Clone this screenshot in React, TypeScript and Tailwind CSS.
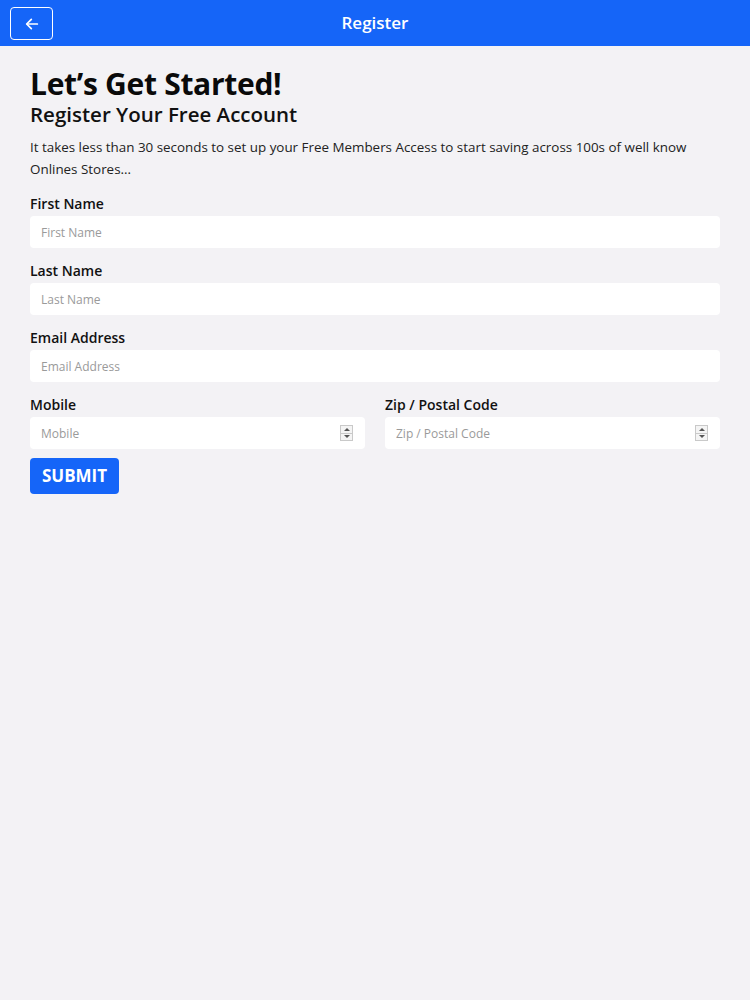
import React from 'react'

const font = { fontFamily: '"Open Sans", "Noto Sans", sans-serif' }

function Spinner() {
  return (
    <div className="absolute right-[12px] top-1/2 -translate-y-1/2 flex h-[16px] w-[13px] flex-col border border-[#c9c9c9] bg-[#f4f4f4]">
      <div className="flex flex-1 items-center justify-center border-b border-[#c9c9c9]">
        <div className="h-0 w-0 border-x-[3px] border-b-[3px] border-x-transparent border-b-[#555]" />
      </div>
      <div className="flex flex-1 items-center justify-center">
        <div className="h-0 w-0 border-x-[3px] border-t-[3px] border-x-transparent border-t-[#555]" />
      </div>
    </div>
  )
}

function Field({ label, spinner }: { label: string; spinner?: boolean }) {
  return (
    <div className="flex flex-col">
      <label className="mb-[3px] text-[14px] font-semibold leading-[19px] text-[#111]">{label}</label>
      <div className="relative">
        <input
          type="text"
          placeholder={label}
          className="h-[32px] w-full rounded-[4px] bg-white px-[11px] text-[12px] text-[#333] outline-none placeholder:text-[#9a9a9a]"
          style={font}
        />
        {spinner && <Spinner />}
      </div>
    </div>
  )
}

export default function App() {
  return (
    <div className="min-h-[1000px] bg-[#f3f2f5]" style={font}>
      <header className="relative flex h-[46px] items-center justify-center bg-[#1565f8]">
        <button className="absolute left-[10px] top-[7px] flex h-[33px] w-[43px] items-center justify-center rounded-[4px] border-[1.5px] border-white">
          <svg width="16" height="16" viewBox="0 0 24 24" fill="none" stroke="white" strokeWidth="2.6" strokeLinecap="round" strokeLinejoin="round">
            <path d="M20 12H5" />
            <path d="M11 5l-7 7 7 7" />
          </svg>
        </button>
        <h1 className="text-[17px] font-semibold text-white">Register</h1>
      </header>

      <main className="px-[30px] pt-[20px]">
        <h2 className="text-[30px] font-bold leading-[36px] tracking-[-0.3px] text-[#0a0a0a]">Let’s Get Started!</h2>
        <h3 className="mt-[1px] text-[20.5px] font-semibold leading-[23px] text-[#111]">Register Your Free Account</h3>
        <p className="mt-[10px] text-[13.4px] leading-[22px] text-[#222]">
          It takes less than 30 seconds to set up your Free Members Access to start saving across 100s of well know Onlines Stores...
        </p>

        <form className="mt-[14px] flex flex-col gap-[13px]" onSubmit={(e) => e.preventDefault()}>
          <Field label="First Name" />
          <Field label="Last Name" />
          <Field label="Email Address" />
          <div className="grid grid-cols-2 gap-[20px]">
            <Field label="Mobile" spinner />
            <Field label="Zip / Postal Code" spinner />
          </div>
        </form>
        <button className="mt-[9px] h-[36px] w-[89px] rounded-[4px] bg-[#1565f8] text-[17px] font-bold text-white">SUBMIT</button>
      </main>
    </div>
  )
}
